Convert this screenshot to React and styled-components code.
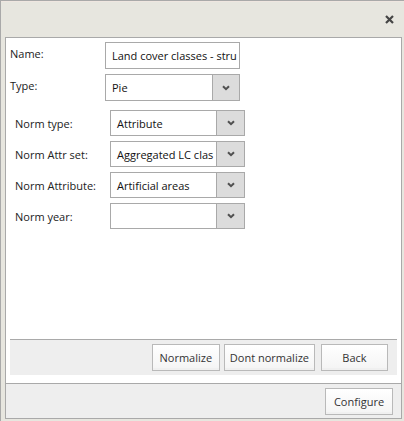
import React from "react";
import styled, { createGlobalStyle } from "styled-components";

const Global = createGlobalStyle`
  html, body { margin: 0; padding: 0; }
  body { font-family: "Open Sans", "DejaVu Sans", sans-serif; font-size: 11px; color: #222; }
  * { box-sizing: border-box; }
`;

const Window = styled.div`
  width: 404px;
  height: 421px;
  background: #e7e6df;
  border-top: 1px solid #a9a9a9;
  border-left: 1px solid #a9a9a9;
  display: flex;
  flex-direction: column;
`;

const TitleBar = styled.div`
  height: 36px;
  flex: none;
  border-top: 1px solid #efe6e0;
  display: flex;
  align-items: center;
  justify-content: flex-end;
  padding-right: 10px;
`;

const CloseButton = styled.button`
  border: 0;
  background: none;
  padding: 0;
  width: 9px;
  height: 9px;
  display: flex;
  cursor: pointer;
`;

const Panel = styled.div`
  flex: 1;
  margin: 0 2px 2px 4px;
  border: 1px solid #a9a9a9;
  background: #fff;
  display: flex;
  flex-direction: column;
`;

const Content = styled.div`
  flex: 1;
  display: flex;
  flex-direction: column;
  padding: 4px 4px 8px 4px;
`;

const Form = styled.div`
  display: flex;
  flex-direction: column;
  gap: ${(p) => p.$gap}px;
  padding-left: ${(p) => p.$indent}px;
  margin-top: ${(p) => p.$top || 0}px;
`;

const Row = styled.div`
  display: grid;
  grid-template-columns: 95px 135px;
  height: ${(p) => p.$h}px;
  align-items: ${(p) => (p.$top ? "start" : "center")};
`;

const Label = styled.label`
  line-height: 15px;
  padding-top: ${(p) => (p.$top ? 4 : 0)}px;
  color: #222;
`;

const Field = styled.div`
  height: 100%;
  border: 1px solid #a9a9a9;
  background: #fff;
  display: flex;
  align-items: stretch;
`;

const Value = styled.div`
  flex: 1;
  display: flex;
  align-items: center;
  padding-left: 6px;
  white-space: nowrap;
  overflow: hidden;
  color: #111;
`;

const Trigger = styled.div`
  flex: none;
  width: ${(p) => p.$w}px;
  border-left: 1px solid #a9a9a9;
  background: #dcdcdc;
  display: flex;
  align-items: center;
  justify-content: center;
`;

const Toolbar = styled.div`
  margin-top: auto;
  height: 36px;
  border-top: 1px solid #a9a9a9;
  background: #eeeeee;
  display: flex;
  align-items: center;
  justify-content: flex-end;
  padding: 0 9px 0 0;
`;

const Footer = styled.div`
  height: 35px;
  flex: none;
  border-top: 1px solid #a9a9a9;
  background: #eeeeee;
  display: flex;
  align-items: center;
  justify-content: flex-end;
  padding-right: 8px;
`;

const Button = styled.button`
  height: 27px;
  min-width: ${(p) => p.$min || 67}px;
  margin-left: ${(p) => p.$ml || 0}px;
  padding: 0 5px;
  border: 1px solid #b9b9b9;
  background: linear-gradient(#ffffff, #f4f4f4);
  box-shadow: inset 0 -2px 0 #f0f0f0;
  font-family: "Open Sans", "DejaVu Sans", sans-serif;
  font-size: 11px;
  color: #333;
  cursor: pointer;
`;

const Chevron = () => (
  <svg width="8" height="6" viewBox="0 0 8 6">
    <polyline points="1,1.2 4,4.2 7,1.2" fill="none" stroke="#505050" strokeWidth="2" />
  </svg>
);

const Cross = () => (
  <svg width="9" height="9" viewBox="0 0 9 9">
    <path d="M1,1 L8,8 M8,1 L1,8" stroke="#454545" strokeWidth="2.2" strokeLinecap="butt" />
  </svg>
);

const Select = ({ value, w }) => (
  <Field>
    <Value>{value}</Value>
    <Trigger $w={w}>
      <Chevron />
    </Trigger>
  </Field>
);

const norms = [
  ["Norm type:", "Attribute"],
  ["Norm Attr set:", "Aggregated LC clas"],
  ["Norm Attribute:", "Artificial areas"],
  ["Norm year:", ""],
];

export default function App() {
  return (
    <>
      <Global />
      <Window>
        <TitleBar>
          <CloseButton aria-label="close">
            <Cross />
          </CloseButton>
        </TitleBar>
        <Panel>
          <Content>
            <Form $gap={5} $indent={0}>
              <Row $h={27} $top>
                <Label $top>Name:</Label>
                <Field>
                  <Value>Land cover classes - stru</Value>
                </Field>
              </Row>
              <Row $h={27} $top>
                <Label $top>Type:</Label>
                <Select value="Pie" w={27} />
              </Row>
            </Form>
            <Form $gap={5} $indent={5} $top={9}>
              {norms.map(([l, v]) => (
                <Row key={l} $h={26}>
                  <Label>{l}</Label>
                  <Select value={v} w={28} />
                </Row>
              ))}
            </Form>
            <Toolbar>
              <Button $min={68}>Normalize</Button>
              <Button $ml={4}>Dont normalize</Button>
              <Button $ml={6}>Back</Button>
            </Toolbar>
          </Content>
          <Footer>
            <Button $min={68}>Configure</Button>
          </Footer>
        </Panel>
      </Window>
    </>
  );
}
